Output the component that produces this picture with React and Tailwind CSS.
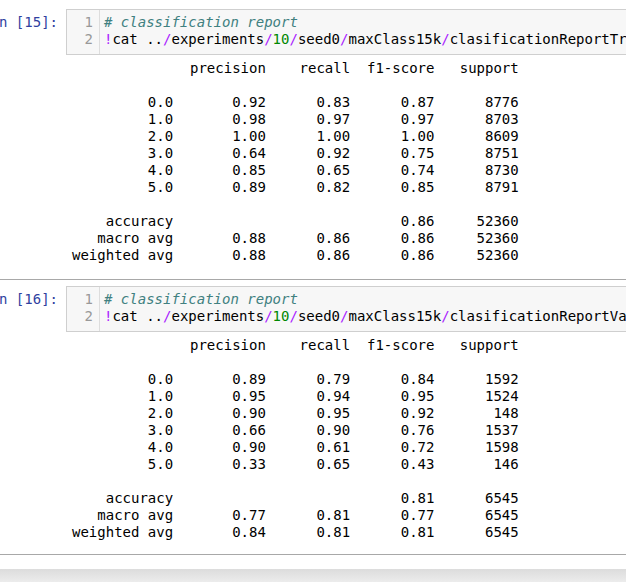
const mono = { fontFamily: '"DejaVu Sans Mono", monospace' };

const cells = [
  {
    n: 15,
    file: "clasificationReportTrain.txt",
    rows: [
      ["0.0", "0.92", "0.83", "0.87", "8776"],
      ["1.0", "0.98", "0.97", "0.97", "8703"],
      ["2.0", "1.00", "1.00", "1.00", "8609"],
      ["3.0", "0.64", "0.92", "0.75", "8751"],
      ["4.0", "0.85", "0.65", "0.74", "8730"],
      ["5.0", "0.89", "0.82", "0.85", "8791"],
    ],
    acc: ["0.86", "52360"],
    macro: ["0.88", "0.86", "0.86", "52360"],
    weighted: ["0.88", "0.86", "0.86", "52360"],
  },
  {
    n: 16,
    file: "clasificationReportVal.txt",
    rows: [
      ["0.0", "0.89", "0.79", "0.84", "1592"],
      ["1.0", "0.95", "0.94", "0.95", "1524"],
      ["2.0", "0.90", "0.95", "0.92", "148"],
      ["3.0", "0.66", "0.90", "0.76", "1537"],
      ["4.0", "0.90", "0.61", "0.72", "1598"],
      ["5.0", "0.33", "0.65", "0.43", "146"],
    ],
    acc: ["0.81", "6545"],
    macro: ["0.77", "0.81", "0.77", "6545"],
    weighted: ["0.84", "0.81", "0.81", "6545"],
  },
];

const r = (s, w) => s.padStart(w, " ");

// same layout as sklearn's classification_report text
function report(c) {
  const lines = [];
  lines.push(r("", 12) + " " + r("precision", 10) + r("recall", 10) + r("f1-score", 10) + r("support", 10));
  lines.push("");
  c.rows.forEach((row) => {
    lines.push(r(row[0], 12) + " " + r(row[1], 10) + r(row[2], 10) + r(row[3], 10) + r(row[4], 10));
  });
  lines.push("");
  lines.push(r("accuracy", 12) + " " + r("", 10) + r("", 10) + r(c.acc[0], 10) + r(c.acc[1], 10));
  lines.push(r("macro avg", 12) + " " + r(c.macro[0], 10) + r(c.macro[1], 10) + r(c.macro[2], 10) + r(c.macro[3], 10));
  lines.push(r("weighted avg", 12) + " " + r(c.weighted[0], 10) + r(c.weighted[1], 10) + r(c.weighted[2], 10) + r(c.weighted[3], 10));
  return lines.join("\n");
}

function Cell({ c, first }) {
  return (
    <div className={`border-b border-[#a8a8a8] ${first ? "pt-[9px] pb-[15px]" : "pt-[6px] pb-[13px]"}`}>
      <div className="flex items-start">
        <div className="w-[66px] shrink-0 flex justify-end pr-[8px] pt-[5px] text-[#303f9f] text-[14px] leading-[17px] whitespace-pre">
          In [{c.n}]:
        </div>
        <div className="flex w-[720px] shrink-0 border border-[#cfcfcf] bg-[#f7f7f7] text-[14px] leading-[17px]">
          <div className="w-[33px] shrink-0 border-r border-[#dddddd] pr-[6px] pt-[4px] pb-[6px] text-right text-[#999999]">
            <div>1</div>
            <div>2</div>
          </div>
          <div className="pl-[4px] pt-[4px] pb-[6px] whitespace-pre text-black">
            <div className="italic text-[#408080]"># classification report</div>
            <div>
              <span className="text-[#aa22ff]">!</span>cat ..<span className="text-[#aa22ff]">/</span>experiments
              <span className="text-[#aa22ff]">/</span>
              <span className="text-[#008800]">10</span>
              <span className="text-[#aa22ff]">/</span>seed0<span className="text-[#aa22ff]">/</span>maxClass15k
              <span className="text-[#aa22ff]">/</span>
              {c.file}
            </div>
          </div>
        </div>
      </div>
      <pre className="ml-[67px] mt-[5px] pl-[5px] text-[14px] leading-[17px] text-black" style={mono}>
        {report(c)}
      </pre>
    </div>
  );
}

export default function App() {
  return (
    <div className="w-[626px] h-[582px] overflow-hidden bg-white flex flex-col" style={mono}>
      <div>
        {cells.map((c, i) => (
          <Cell key={c.n} c={c} first={i === 0} />
        ))}
      </div>
      <div className="h-[14px] shrink-0" />
      <div className="flex-1 bg-gradient-to-b from-[#dcdcdc] to-[#ececec]" />
    </div>
  );
}
